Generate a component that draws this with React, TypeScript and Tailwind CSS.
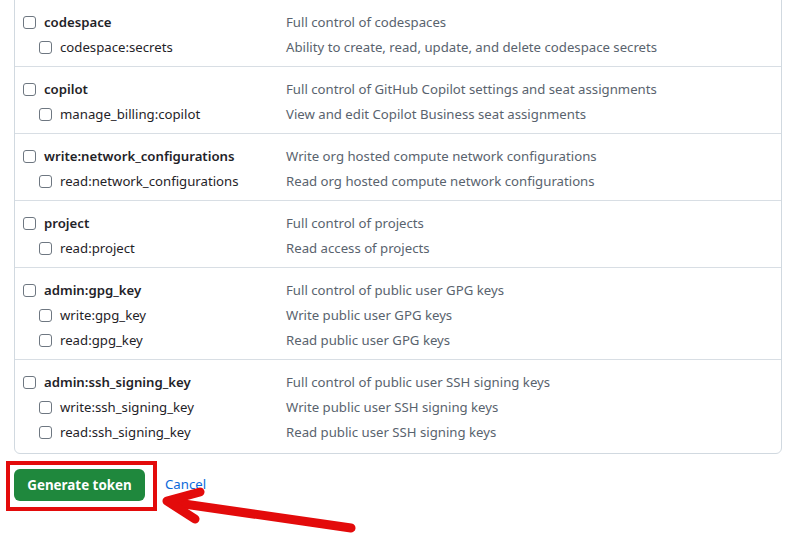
import React from 'react';

type Scope = { name: string; desc: string };

const groups: Scope[][] = [
  [
    { name: 'codespace', desc: 'Full control of codespaces' },
    { name: 'codespace:secrets', desc: 'Ability to create, read, update, and delete codespace secrets' },
  ],
  [
    { name: 'copilot', desc: 'Full control of GitHub Copilot settings and seat assignments' },
    { name: 'manage_billing:copilot', desc: 'View and edit Copilot Business seat assignments' },
  ],
  [
    { name: 'write:network_configurations', desc: 'Write org hosted compute network configurations' },
    { name: 'read:network_configurations', desc: 'Read org hosted compute network configurations' },
  ],
  [
    { name: 'project', desc: 'Full control of projects' },
    { name: 'read:project', desc: 'Read access of projects' },
  ],
  [
    { name: 'admin:gpg_key', desc: 'Full control of public user GPG keys' },
    { name: 'write:gpg_key', desc: 'Write public user GPG keys' },
    { name: 'read:gpg_key', desc: 'Read public user GPG keys' },
  ],
  [
    { name: 'admin:ssh_signing_key', desc: 'Full control of public user SSH signing keys' },
    { name: 'write:ssh_signing_key', desc: 'Write public user SSH signing keys' },
    { name: 'read:ssh_signing_key', desc: 'Read public user SSH signing keys' },
  ],
];

const Checkbox = () => (
  <input
    type="checkbox"
    className="appearance-none w-[13px] h-[13px] shrink-0 rounded-[3px] border border-[#6e7781] bg-white m-0"
  />
);

const ScopeRow = ({ scope, child }: { scope: Scope; child: boolean }) => (
  <div className="grid grid-cols-[263px_1fr] items-center h-[21px]">
    <label className={`flex items-center gap-2 ${child ? 'pl-4' : ''}`}>
      <Checkbox />
      <span className={child ? 'text-[#1f2328]' : 'font-semibold text-[#1f2328]'}>{scope.name}</span>
    </label>
    <div className="text-[#59636e]">{scope.desc}</div>
  </div>
);

export default function App() {
  return (
    <div
      className="w-[811px] h-[542px] bg-white overflow-hidden text-[13.2px] leading-[21px]"
      style={{ fontFamily: '"Noto Sans", "Open Sans", sans-serif' }}
    >
      <div className="ml-[14px] w-[768px] -mt-px border border-[#d1d9e0] rounded-b-md divide-y divide-[#d8dee4]">
        {groups.map((g, gi) => (
          <div key={gi} className="flex flex-col gap-1 pl-2 pt-3 pb-2 last:pb-[10px]">
            {g.map((s, si) => (
              <ScopeRow key={s.name} scope={s} child={si > 0} />
            ))}
          </div>
        ))}
      </div>

      <div className="relative flex items-center mt-[15px] ml-[14px]">
        <button className="w-[131px] h-8 rounded-md bg-[#1f883d] text-white font-bold text-[13.4px]">
          Generate token
        </button>
        <a href="#" className="ml-5 -mt-0.5 text-[#0969da]">
          Cancel
        </a>
        {/* red annotation box */}
        <div className="absolute left-[-8px] top-[-8px] w-[151px] h-[50px] border-4 border-[#e30b0b] pointer-events-none" />
        {/* red arrow */}
        <svg
          className="absolute left-[122px] top-[14px] pointer-events-none"
          width="240"
          height="60"
          viewBox="136 483 240 60"
        >
          <g stroke="#e30b0b" strokeWidth="9" strokeLinecap="round" strokeLinejoin="round" fill="none">
            <line x1="351" y1="528" x2="170" y2="502" />
            <polyline points="200,492 167,501 195,519" />
          </g>
        </svg>
      </div>
    </div>
  );
}
